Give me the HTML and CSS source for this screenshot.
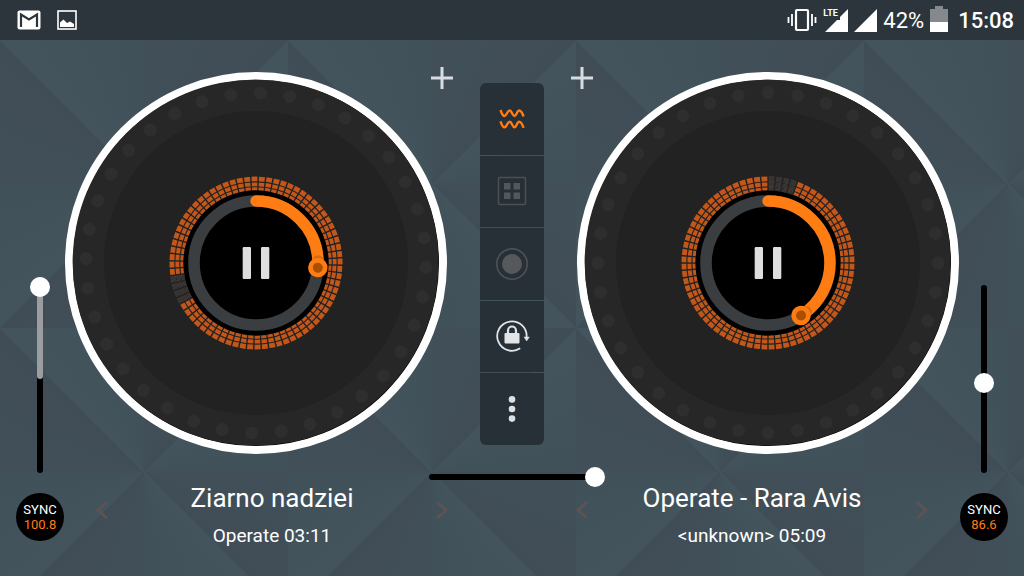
FILE: index.html
```html
<!DOCTYPE html>
<html lang="en">
<head>
  <meta charset="UTF-8">
  <meta name="viewport" content="width=device-width, initial-scale=1.0">
  <title>DJ Mixer</title>
  <link rel="stylesheet" href="styles.css">
</head>
<body>

<!-- shared platter drawing, both decks use it -->
<svg class="defs" width="0" height="0" aria-hidden="true">
  <defs>
    <g id="platter-base">
      <circle r="187" fill="#000" stroke="#fff" stroke-width="8"/>
      <circle cx="-0.4" cy="-0.4" r="183" fill="#272727"/>
      <circle r="152" fill="#222"/>
    </g>
    <g id="platter-rotor" fill="none">
      <circle r="170" pathLength="360" stroke="#2e2e2e" stroke-width="13" stroke-linecap="round" stroke-dasharray="0 10"/>
      <g stroke="#c3571a">
        <circle r="84.1" stroke-width="4.8"/>
        <circle r="78.600" stroke-width="4"/>
        <circle r="74" stroke-width="3"/>
      </g>
      <g stroke="#343434" stroke-dasharray="20 340" transform="rotate(-90)">
        <circle r="84.1" pathLength="360" stroke-width="5.2"/>
        <circle r="78.600" pathLength="360" stroke-width="4.4"/>
        <circle r="74" pathLength="360" stroke-width="3.4"/>
      </g>
      <circle r="80" pathLength="360" stroke="#222" stroke-width="16" stroke-dasharray="1 4" stroke-dashoffset="0.5"/>
    </g>
    <g id="platter-center">
      <circle r="72.5" fill="#000"/>
      <circle r="62" fill="none" stroke="#3a3e41" stroke-width="11.6"/>
    </g>
    <g id="knob">
      <circle r="9.7" fill="#ff7c12"/>
      <circle r="5" fill="#ab4e00"/>
    </g>
    <g id="pause-bars" fill="#dedede">
      <rect x="-13.3" y="-16" width="8.3" height="32" rx="1.2"/>
      <rect x="5" y="-16" width="8.3" height="32" rx="1.2"/>
    </g>
  </defs>
</svg>

<header class="status-bar">
  <div class="status-left">
    <svg width="24" height="20" viewBox="0 0 24 20" aria-label="Mail">
      <rect x="0.5" y="0.5" width="23" height="19" rx="2" fill="#fff"/>
      <path d="M4 17V4.500L12 9.500L20 4.500V17" fill="none" stroke="#2c343c" stroke-width="2.200"/>
    </svg>
    <svg width="20" height="20" viewBox="0 0 20 20" aria-label="Picture">
      <rect x="1" y="1" width="18" height="18" fill="none" stroke="#fff" stroke-width="1.6"/>
      <path d="M3 17V12.500L6.500 9.500L10 13L13 11.500L17 14V17Z" fill="#fff"/>
    </svg>
  </div>
  <div class="status-right">
    <svg width="30" height="24" viewBox="0 0 30 24" aria-label="Vibrate">
      <g fill="none" stroke="#fff">
        <rect x="9" y="2" width="12" height="20" rx="1" stroke-width="2.2"/>
        <path d="M5 6V18M25 6V18" stroke-width="1.8"/>
        <path d="M1.500 9V15M28.500 9V15" stroke-width="1.8"/>
      </g>
    </svg>
    <span class="signal">
      <span class="network">LTE</span>
      <svg width="23" height="23" viewBox="0 0 23 23" aria-hidden="true"><path d="M0 23L12 11H15L15 8L23 0V23Z" fill="#fff"/></svg>
    </span>
    <svg width="23" height="23" viewBox="0 0 23 23" aria-label="Signal"><path d="M0 23L23 0V23Z" fill="#fff"/></svg>
    <span class="battery-level">42%</span>
    <svg class="battery" width="18" height="26" viewBox="0 0 18 26" aria-label="Battery">
      <path d="M5 0H13V3H18V16H0V3H5Z" fill="#85898d"/>
      <rect y="16" width="18" height="10" fill="#fff"/>
    </svg>
    <time class="clock">15:08</time>
  </div>
</header>

<main class="mixer">
  <section class="deck deck-left">
    <div class="side">
      <label class="slider slider-vertical">
        <span class="slider-fill"></span>
        <input type="range" min="0" max="100" value="100" aria-label="Left deck pitch">
      </label>
      <button class="sync"><span>SYNC</span><span class="bpm">100.8</span></button>
    </div>
    <div class="deck-main">
      <div class="platter">
        <svg class="disc" viewBox="-192 -192 384 384" aria-hidden="true">
          <use href="#platter-base"/>
          <use href="#platter-rotor" transform="rotate(241.5)"/>
          <use href="#platter-center"/>
          <g transform="rotate(-90)">
            <circle r="62" pathLength="360" fill="none" stroke="#ff7c12" stroke-width="11.4" stroke-linecap="round" stroke-dasharray="93 267"/>
            <circle cx="62" r="5.7" fill="#d96a12" transform="rotate(88)"/>
            <use href="#knob" transform="rotate(94.3) translate(62 0)"/>
          </g>
        </svg>
        <button class="pause" aria-label="Pause left deck">
          <svg width="28" height="32" viewBox="-14 -16 28 32"><use href="#pause-bars"/></svg>
        </button>
      </div>
      <div class="track-info">
        <button class="arrow" aria-label="Previous track"><svg width="12" height="18" viewBox="0 0 12 18"><path d="M11 1L2 9L11 17"/></svg></button>
        <div class="track">
          <h2 class="title">Ziarno nadziei</h2>
          <p class="artist">Operate 03:11</p>
        </div>
        <button class="arrow" aria-label="Next track"><svg width="12" height="18" viewBox="0 0 12 18"><path d="M1 1L10 9L1 17"/></svg></button>
      </div>
    </div>
    <button class="add" aria-label="Load left track"><svg width="24" height="24" viewBox="0 0 24 24"><path d="M12 1V23M1 12H23"/></svg></button>
  </section>

  <div class="center">
    <nav class="toolbar">
      <button aria-label="Waveform">
        <svg width="32" height="32" viewBox="0 0 32 32" fill="none" stroke="#ff7c12" stroke-width="2.4">
          <path d="M4.500 7Q6.500 13 8.600 13C10.800 13 11.200 7.500 13.600 7.500S16.200 13 18.500 13S20.800 7.500 23.200 7.500Q25.500 7.500 27.600 13.500"/>
          <path d="M4.500 18.300Q6.500 24.300 8.600 24.300C10.800 24.300 11.200 18.800 13.600 18.800S16.200 24.300 18.500 24.300S20.800 18.800 23.200 18.800Q25.500 18.800 27.600 24.800"/>
        </svg>
      </button>
      <button aria-label="Sampler">
        <svg width="32" height="32" viewBox="0 0 32 32">
          <rect x="2.500" y="2.500" width="27" height="27" rx="1" fill="none" stroke="#4d5053" stroke-width="1.500"/>
          <path d="M8 8h6.500v6.500H8zM17.500 8H24v6.500h-6.500zM8 17.500h6.500V24H8zM17.500 17.500H24V24h-6.500z" fill="#55575a"/>
        </svg>
      </button>
      <button aria-label="Record">
        <svg width="32" height="32" viewBox="0 0 32 32">
          <circle cx="16" cy="16" r="15.200" fill="none" stroke="#515356" stroke-width="1.500"/>
          <circle cx="16" cy="16" r="10" fill="#56585b"/>
        </svg>
      </button>
      <button aria-label="Lock rotation">
        <svg width="36" height="36" viewBox="-18 -17 36 36" stroke="#e2e4e6" fill="none">
          <path d="M14.600 1A14.700 14.700 0 1 0 8.200 12.200" stroke-width="1.800"/>
          <path d="M12 1H17.300L14.700 5Z" fill="#e2e4e6" stroke="#e2e4e6" stroke-width="0.500"/>
          <path d="M-4 -2V-5.500A4 4 0 0 1 4 -5.500V-2" stroke-width="2.200"/>
          <rect x="-7.500" y="-3" width="15" height="10.500" rx="1" fill="#e2e4e6" stroke="none"/>
        </svg>
      </button>
      <button aria-label="More">
        <svg width="32" height="32" viewBox="0 0 32 32" fill="#dedfe1">
          <circle cx="16" cy="6.400" r="3.300"/>
          <circle cx="16" cy="16" r="3.300"/>
          <circle cx="16" cy="25.600" r="3.300"/>
        </svg>
      </button>
    </nav>
    <label class="slider crossfader">
      <input type="range" min="0" max="100" value="100" aria-label="Crossfader">
    </label>
  </div>

  <section class="deck deck-right">
    <div class="side">
      <label class="slider slider-vertical">
        <input type="range" min="0" max="100" value="48" aria-label="Right deck pitch">
      </label>
      <button class="sync"><span>SYNC</span><span class="bpm">86.6</span></button>
    </div>
    <div class="deck-main">
      <div class="platter">
        <svg class="disc" viewBox="-192 -192 384 384" aria-hidden="true">
          <use href="#platter-base"/>
          <use href="#platter-rotor"/>
          <use href="#platter-center"/>
          <g transform="rotate(-90)">
            <circle r="62" pathLength="360" fill="none" stroke="#ff7c12" stroke-width="11.4" stroke-linecap="round" stroke-dasharray="146 214"/>
            <circle cx="62" r="5.7" fill="#d96a12" transform="rotate(142)"/>
            <use href="#knob" transform="rotate(147.8) translate(62 0)"/>
          </g>
        </svg>
        <button class="pause" aria-label="Pause right deck">
          <svg width="28" height="32" viewBox="-14 -16 28 32"><use href="#pause-bars"/></svg>
        </button>
      </div>
      <div class="track-info">
        <button class="arrow" aria-label="Previous track"><svg width="12" height="18" viewBox="0 0 12 18"><path d="M11 1L2 9L11 17"/></svg></button>
        <div class="track">
          <h2 class="title">Operate - Rara Avis</h2>
          <p class="artist">&lt;unknown&gt; 05:09</p>
        </div>
        <button class="arrow" aria-label="Next track"><svg width="12" height="18" viewBox="0 0 12 18"><path d="M1 1L10 9L1 17"/></svg></button>
      </div>
    </div>
    <button class="add" aria-label="Load right track"><svg width="24" height="24" viewBox="0 0 24 24"><path d="M12 1V23M1 12H23"/></svg></button>
  </section>
</main>

</body>
</html>
```
FILE: styles.css
```css
*, *:before, *:after {
  box-sizing: border-box;
}

body {
  margin: 0;
  min-height: 100vh;
  display: flex;
  flex-direction: column;
  font-family: Roboto, "Liberation Sans", sans-serif;
  color: #fff;
  background-color: #404e57;
}

button {
  display: flex;
  align-items: center;
  justify-content: center;
  margin: 0;
  padding: 0;
  border: 0;
  background: none;
  color: inherit;
  font: inherit;
  cursor: pointer;
}

svg {
  display: block;
}

.defs {
  position: absolute;
}

/* status bar */
.status-bar {
  display: flex;
  align-items: center;
  justify-content: space-between;
  height: 40px;
  padding: 0 10px 0 17px;
  background: #2c343c;
}

.status-left {
  display: flex;
  align-items: center;
  gap: 16px;
}

.status-right {
  display: flex;
  align-items: center;
  gap: 6px;
}

.signal {
  position: relative;
  padding-left: 2px;
}

.network {
  position: absolute;
  top: -1px;
  left: 0;
  font-size: 9px;
  line-height: 10px;
  font-weight: 700;
}

.battery-level {
  font-size: 22px;
}

.battery {
  margin-top: -2px;
}

.clock {
  margin-left: 4px;
  font-size: 22px;
  font-weight: 500;
}

/* mixer */
.mixer {
  flex: 1;
  display: grid;
  grid-template-columns: 1fr 64px 1fr;
  background-image: repeating-conic-gradient(#414f58 0, #404d57 45deg, #43545c 45deg, #415159 90deg);
  background-size: 288px 288px;
}

.deck {
  position: relative;
  display: flex;
  padding: 31px 32px 0 16px;
}

.deck-right {
  flex-direction: row-reverse;
  padding: 31px 16px 0 32px;
}

.side {
  display: flex;
  flex-direction: column;
  align-items: center;
  justify-content: flex-end;
  gap: 12px;
  width: 48px;
  padding-bottom: 35px;
}

.deck-main {
  flex: 1;
}

.platter {
  display: grid;
  place-items: center;
}

.disc {
  grid-area: 1 / 1;
  width: 100%;
  max-width: 384px;
}

.pause {
  grid-area: 1 / 1;
  width: 96px;
  height: 96px;
  border-radius: 50%;
}

.track-info {
  display: flex;
  align-items: flex-start;
  justify-content: space-between;
  margin-left: 32px;
  padding-top: 27px;
}

.deck-right .track-info {
  margin-left: 0;
  margin-right: 32px;
}

.track {
  text-align: center;
}

.title {
  margin: 0 0 10px;
  font-size: 26px;
  line-height: 32px;
  font-weight: 400;
}

.artist {
  margin: 0;
  font-size: 19px;
  line-height: 24px;
}

.arrow {
  width: 12px;
  height: 56px;
}

.arrow path {
  fill: none;
  stroke: #5b5354;
  stroke-width: 3;
}

.add {
  position: absolute;
  top: 22px;
  right: 22px;
  width: 32px;
  height: 32px;
}

.deck-right .add {
  right: auto;
  left: 22px;
}

.add path {
  fill: none;
  stroke: #d9dde0;
  stroke-width: 3;
}

.sync {
  flex-direction: column;
  width: 48px;
  height: 48px;
  border-radius: 50%;
  background: #000;
  font-size: 13px;
  line-height: 15px;
}

.bpm {
  color: #ff7c12;
}

/* center column */
.center {
  z-index: 1;
  display: flex;
  flex-direction: column;
  align-items: center;
  gap: 22px;
  padding-top: 43px;
}

.toolbar {
  display: grid;
  grid-template-rows: repeat(5, 1fr);
  gap: 1px;
  width: 100%;
  height: 362px;
  border-radius: 6px;
  overflow: hidden;
}

.toolbar button {
  background: #273037;
}

/* sliders: the track sits under the input in the same cell */
.slider {
  display: grid;
}

.slider:before {
  content: "";
  grid-area: 1 / 1;
  border-radius: 3px;
  background: #000;
}

.slider input {
  grid-area: 1 / 1;
  -webkit-appearance: none;
  appearance: none;
  margin: 0;
  background: none;
}

.slider input::-webkit-slider-thumb {
  -webkit-appearance: none;
  width: 20px;
  height: 20px;
  border-radius: 50%;
  background: #fff;
}

.slider-vertical {
  width: 20px;
  height: 204px;
}

.slider-vertical:before {
  margin: 8px 7px;
}

.slider-vertical input {
  writing-mode: vertical-lr;
  direction: rtl;
  width: 20px;
  height: 204px;
}

.slider-fill {
  grid-area: 1 / 1;
  height: 50%;
  margin: 0 7px;
  border-radius: 3px;
  background: #9b9da1;
}

.crossfader {
  width: 186px;
  height: 20px;
}

.crossfader:before {
  margin: 7px 10px;
}

.crossfader input {
  width: 186px;
  height: 20px;
}
```
